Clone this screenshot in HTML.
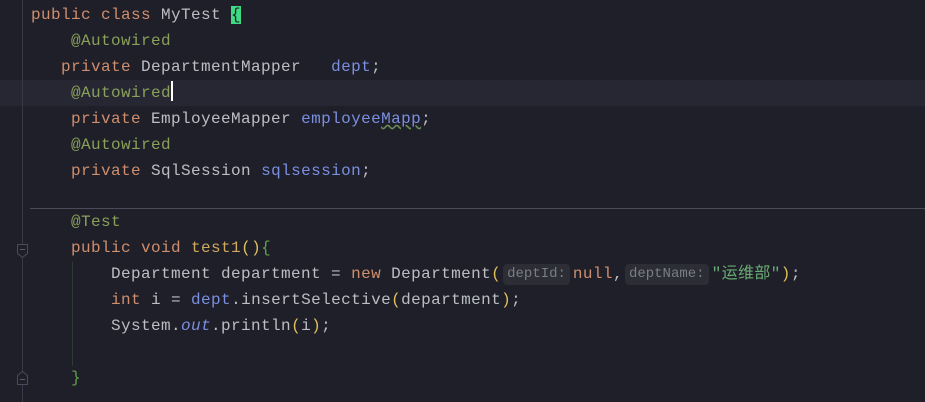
<!DOCTYPE html>
<html><head><meta charset="utf-8"><style>
body{margin:0;width:925px;height:402px;background:#1e1f29;overflow:hidden;position:relative;font-family:"Liberation Mono","Noto Sans CJK SC",monospace;}
.l{position:absolute;left:31px;height:26px;line-height:26px;font-size:16px;letter-spacing:0.4px;color:#bcbec4;white-space:pre;}
.k{color:#cf8e6d}.a{color:#8aa05a}.f{color:#7b8fe0}.s{color:#6aab73}.y{color:#e3bf5a}.g{color:#5fa04e}
.h{display:inline-block;background:#2c2d35;color:#7a7e85;font-size:14px;letter-spacing:0;line-height:21px;height:21px;border-radius:4px;padding:0 4px;margin:0 3px 0 2px;vertical-align:1px;}
</style></head><body>
<div style="position:absolute;left:0;top:80px;width:925px;height:26px;background:#262733"></div>
<div style="position:absolute;left:30px;top:208px;width:895px;height:1px;background:#4a4b57"></div>
<div style="position:absolute;left:22px;top:0;width:1px;height:402px;background:#383849"></div>
<div style="position:absolute;left:72px;top:262px;width:1px;height:104px;background:#2f3a30"></div>
<svg style="position:absolute;left:0;top:0" width="40" height="402">
<path d="M17.5 244.5h10v9l-5 4-5-4z" fill="#1e1f29" stroke="#4a4a5c"/><path d="M20 249.5h5" stroke="#5a5a6c"/>
<path d="M17.5 384.5h10v-9l-5-4-5 4z" fill="#1e1f29" stroke="#4a4a5c"/><path d="M20 379.5h5" stroke="#5a5a6c"/>
</svg>
<div class="l" style="top:2px"><span class="k">public class </span>MyTest <span style="background:#3ddc84;color:#1e1f29">{</span></div>
<div class="l" style="top:28px">    <span class="a">@Autowired</span></div>
<div class="l" style="top:54px">   <span class="k">private </span>DepartmentMapper   <span class="f">dept</span>;</div>
<div class="l" style="top:80px">    <span class="a">@Autowired</span><span style="display:inline-block;width:2px;height:20px;background:#fff;vertical-align:-4px"></span></div>
<div class="l" style="top:106px">    <span class="k">private </span>EmployeeMapper <span class="f">employee<span style="text-decoration:underline wavy #6a8a5a">Mapp</span></span>;</div>
<div class="l" style="top:132px">    <span class="a">@Autowired</span></div>
<div class="l" style="top:158px">    <span class="k">private </span>SqlSession <span class="f">sqlsession</span>;</div>
<div class="l" style="top:209px">    <span class="a">@Test</span></div>
<div class="l" style="top:235px">    <span class="k">public void </span><span style="color:#d0a860">test1</span><span class="y">()</span><span class="g">{</span></div>
<div class="l" style="top:261px">        Department department = <span class="k">new </span>Department<span class="y">(</span><span class="h">deptId:</span><span class="k">null</span>,<span class="h">deptName:</span><span class="s">"运维部"</span><span class="y">)</span>;</div>
<div class="l" style="top:287px">        <span class="k">int </span>i = <span class="f">dept</span>.insertSelective<span class="y">(</span>department<span class="y">)</span>;</div>
<div class="l" style="top:313px">        System.<span class="f" style="font-style:italic">out</span>.println<span class="y">(</span>i<span class="y">)</span>;</div>
<div class="l" style="top:365px">    <span class="g">}</span></div>
</body></html>
